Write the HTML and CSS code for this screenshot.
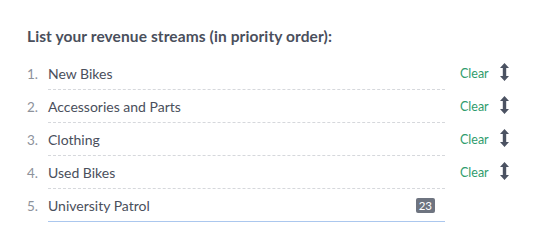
FILE: index.html
```html
<!DOCTYPE html>
<html>
<head>
<meta charset="utf-8">
<link rel="stylesheet" href="styles.css">
</head>
<body>
<div class="panel">
  <h2 class="title">List your revenue streams (in priority order):</h2>
  <ol class="streams">
    <li class="row">
      <span class="num">1.</span>
      <div class="field"><span class="value">New Bikes</span></div>
      <a class="clear">Clear</a>
      <svg class="drag" width="9" height="18" viewBox="0 0 9 18"><path d="M4.5 0 L9 5 L6.2 5 L6.2 13 L9 13 L4.5 18 L0 13 L2.8 13 L2.8 5 L0 5 Z" fill="#4b5262"/></svg>
    </li>
    <li class="row">
      <span class="num">2.</span>
      <div class="field"><span class="value">Accessories and Parts</span></div>
      <a class="clear">Clear</a>
      <svg class="drag" width="9" height="18" viewBox="0 0 9 18"><path d="M4.5 0 L9 5 L6.2 5 L6.2 13 L9 13 L4.5 18 L0 13 L2.8 13 L2.8 5 L0 5 Z" fill="#4b5262"/></svg>
    </li>
    <li class="row">
      <span class="num">3.</span>
      <div class="field"><span class="value">Clothing</span></div>
      <a class="clear">Clear</a>
      <svg class="drag" width="9" height="18" viewBox="0 0 9 18"><path d="M4.5 0 L9 5 L6.2 5 L6.2 13 L9 13 L4.5 18 L0 13 L2.8 13 L2.8 5 L0 5 Z" fill="#4b5262"/></svg>
    </li>
    <li class="row">
      <span class="num">4.</span>
      <div class="field"><span class="value">Used Bikes</span></div>
      <a class="clear">Clear</a>
      <svg class="drag" width="9" height="18" viewBox="0 0 9 18"><path d="M4.5 0 L9 5 L6.2 5 L6.2 13 L9 13 L4.5 18 L0 13 L2.8 13 L2.8 5 L0 5 Z" fill="#4b5262"/></svg>
    </li>
    <li class="row">
      <span class="num">5.</span>
      <div class="field active"><span class="value">University Patrol</span><span class="count">23</span></div>
    </li>
  </ol>
</div>
</body>
</html>
```
FILE: styles.css
```css
html, body {
  margin: 0;
  padding: 0;
  background: #ffffff;
}
body {
  font-family: Lato, "Noto Sans", sans-serif;
  color: #4a4f5c;
}
.panel {
  padding: 27px 0 0 27px;
}
.title {
  margin: 0 0 11px 0;
  font-size: 15.5px;
  font-weight: 700;
  color: #4a4f5c;
  line-height: 19px;
  letter-spacing: 0.1px;
}
.streams {
  list-style: none;
  margin: 0;
  padding: 0;
}
.row {
  display: flex;
  align-items: center;
  height: 33px;
}
.num {
  width: 21px;
  font-size: 13.5px;
  color: #8d929b;
}
.field {
  width: 397px;
  height: 32px;
  box-sizing: border-box;
  border-bottom: 1px dashed #d6d8dc;
  display: flex;
  align-items: center;
  justify-content: space-between;
}
.field.active {
  border-bottom: 1.5px solid #abc7ee;
  height: 33px;
}
.value {
  font-size: 14px;
  color: #4a4f5c;
}
.count {
  background: #6e7480;
  color: #ffffff;
  font-size: 11.5px;
  line-height: 15px;
  padding: 0 3px;
  border-radius: 2px;
  margin-right: 10px;
}
.clear {
  margin-left: 15px;
  font-size: 12.5px;
  color: #2f9c6d;
  cursor: pointer;
}
.drag {
  margin-left: 11px;
  margin-bottom: 4px;
}
```
